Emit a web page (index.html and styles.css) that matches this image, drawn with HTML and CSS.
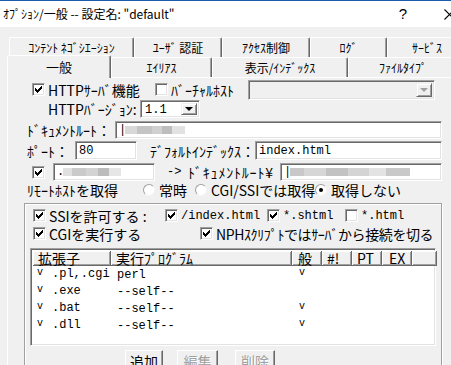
FILE: index.html
```html
<!DOCTYPE html>
<html lang="ja">
<head>
    <meta charset="UTF-8">
    <title>ｵﾌﾟｼｮﾝ/一般</title>
    <link rel="stylesheet" href="styles.css">
</head>
<body>
    <div class="titlebar">
        <span class="title">ｵﾌﾟｼｮﾝ/一般 -- 設定名: "default"</span>
        <span class="help">?</span>
        <span class="close">
            <svg width="11" height="11" viewBox="0 0 11 11"><path d="M0.5 0.5 L10.5 10.5 M10.5 0.5 L0.5 10.5" stroke="#000" stroke-width="1.1" fill="none"/></svg>
        </span>
    </div>

    <div class="tabs tabs-back">
        <div class="tab">ｺﾝﾃﾝﾄ ﾈｺﾞｼｴｰｼｮﾝ</div>
        <div class="tab">ﾕｰｻﾞ 認証</div>
        <div class="tab">ｱｸｾｽ制御</div>
        <div class="tab">ﾛｸﾞ</div>
        <div class="tab">ｻｰﾋﾞｽ</div>
    </div>
    <div class="tabs tabs-front">
        <div class="tab active">一般</div>
        <div class="tab">ｴｲﾘｱｽ</div>
        <div class="tab">表示/ｲﾝﾃﾞｯｸｽ</div>
        <div class="tab">ﾌｧｲﾙﾀｲﾌﾟ</div>
    </div>

    <div class="panel">
        <div class="row row-http">
            <label class="check w-http"><span class="cb on"></span>HTTPｻｰﾊﾞ機能</label>
            <label class="check w-vhost"><span class="cb"></span>ﾊﾞｰﾁｬﾙﾎｽﾄ</label>
            <div class="select disabled w-vselect"><span class="value"></span><span class="drop"><i class="arrow"></i></span></div>
        </div>

        <div class="row row-version">
            <span class="label w-version">HTTPﾊﾞｰｼﾞｮﾝ:</span>
            <div class="select w-vers"><span class="value">1.1</span><span class="drop"><i class="arrow"></i></span></div>
        </div>

        <div class="row row-docroot">
            <span class="label w-docroot">ﾄﾞｷｭﾒﾝﾄﾙｰﾄ：</span>
            <div class="field w-docfield"><span class="caret">|</span><span class="blur blur-a"></span></div>
        </div>

        <div class="row row-port">
            <span class="label w-port">ﾎﾟｰﾄ：</span>
            <div class="field w-portfield">80</div>
            <span class="label w-index">ﾃﾞﾌｫﾙﾄｲﾝﾃﾞｯｸｽ：</span>
            <div class="field w-indexfield">index.html</div>
        </div>

        <div class="row row-alias">
            <span class="cb on"></span>
            <div class="field w-aliasfield"><span class="caret">.</span><span class="blur blur-b"></span></div>
            <span class="label w-arrow">-&gt;</span>
            <span class="label w-aliasroot">ﾄﾞｷｭﾒﾝﾄﾙｰﾄ¥</span>
            <div class="field w-aliasroot-field"><span class="caret">|</span><span class="blur blur-c"></span></div>
        </div>

        <div class="row row-remote">
            <span class="label w-remote">ﾘﾓｰﾄﾎｽﾄを取得</span>
            <label class="radio w-always"><span class="rb"></span>常時</label>
            <label class="radio w-cgionly"><span class="rb"></span>CGI/SSIでは取得</label>
            <label class="radio"><span class="rb on"></span>取得しない</label>
        </div>

        <div class="group">
            <div class="row row-ssi">
                <label class="check w-ssi"><span class="cb on"></span>SSIを許可する :</label>
                <label class="check w-ssi-index"><span class="cb on"></span><span class="mono">/index.html</span></label>
                <label class="check w-ssi-shtml"><span class="cb on"></span><span class="mono">*.shtml</span></label>
                <label class="check"><span class="cb"></span><span class="mono">*.html</span></label>
            </div>
            <div class="row row-cgi">
                <label class="check w-cgi"><span class="cb on"></span>CGIを実行する</label>
                <label class="check tight"><span class="cb on"></span>NPHｽｸﾘﾌﾟﾄではｻｰﾊﾞから接続を切る</label>
            </div>

            <div class="listview">
                <div class="lv-head">
                    <span class="col c-ext">拡張子</span>
                    <span class="col c-prog">実行ﾌﾟﾛｸﾞﾗﾑ</span>
                    <span class="col c-gen">般</span>
                    <span class="col c-sb">#!</span>
                    <span class="col c-pt">PT</span>
                    <span class="col c-ex">EX</span>
                    <span class="col c-rest"></span>
                </div>
                <div class="lv-row">
                    <span class="cell c-ext"><i class="tick">v</i>.pl,.cgi</span>
                    <span class="cell c-prog">perl</span>
                    <span class="cell c-gen"><i class="tick">v</i></span>
                </div>
                <div class="lv-row">
                    <span class="cell c-ext"><i class="tick">v</i>.exe</span>
                    <span class="cell c-prog">--self--</span>
                    <span class="cell c-gen"></span>
                </div>
                <div class="lv-row">
                    <span class="cell c-ext"><i class="tick">v</i>.bat</span>
                    <span class="cell c-prog">--self--</span>
                    <span class="cell c-gen"><i class="tick">v</i></span>
                </div>
                <div class="lv-row">
                    <span class="cell c-ext"><i class="tick">v</i>.dll</span>
                    <span class="cell c-prog">--self--</span>
                    <span class="cell c-gen"><i class="tick">v</i></span>
                </div>
            </div>

            <div class="buttons">
                <button class="push w-add">追加</button>
                <button class="push w-edit" disabled>編集</button>
                <button class="push w-del" disabled>削除</button>
            </div>
        </div>
    </div>
</body>
</html>
```

FILE: styles.css
```css
html, body {
    margin: 0;
    padding: 0;
}

body {
    width: 451px;
    height: 365px;
    overflow: hidden;
    background: #f0f0f0;
    font-family: "Noto Sans CJK JP", sans-serif;
    font-size: 14px;
    line-height: 16px;
    color: #000;
}

/* title bar */
.titlebar {
    width: 472px;
    height: 26px;
    border-top: 1px solid #1b5eab;
    background: #fff;
    display: flex;
    align-items: center;
    font-size: 12px;
}

.title {
    flex: 1;
    margin-left: 3px;
    white-space: nowrap;
}

.help, .close {
    width: 46px;
    display: flex;
    justify-content: center;
    align-items: center;
}

.help {
    font-family: "Liberation Sans", sans-serif;
    font-size: 15px;
}

/* tabs */
.tabs {
    display: flex;
    height: 20px;
    font-size: 12px;
    white-space: nowrap;
}

.tabs-back {
    margin: 10px 0 0 9px;
}

.tabs-front {
    margin-left: 7px;
}

.tab {
    flex: none;
    box-sizing: border-box;
    height: 20px;
    border-top: 1px solid #fff;
    border-left: 1px solid #fff;
    border-right: 1px solid #696969;
    box-shadow: inset -1px 0 #a0a0a0;
    border-radius: 2px 2px 0 0;
    display: flex;
    align-items: center;
    justify-content: center;
    background: #f0f0f0;
}

.tabs-back .tab:nth-child(1) { width: 125px; }
.tabs-back .tab:nth-child(2) { width: 88px; }
.tabs-back .tab:nth-child(3) { width: 88px; }
.tabs-back .tab:nth-child(4) { width: 77px; }
.tabs-back .tab:nth-child(5) { width: 80px; }

.tabs-front .tab:nth-child(1) { width: 104px; }
.tabs-front .tab:nth-child(2) { width: 101px; }
.tabs-front .tab:nth-child(3) { width: 136px; }
.tabs-front .tab:nth-child(4) { width: 110px; }

.tab.active {
    height: 23px;
    margin-top: -2px;
    position: relative;
    z-index: 1;
    font-size: 13px;
}

/* panel */
.panel {
    margin-left: 7px;
    width: 460px;
    height: 300px;
    border-top: 1px solid #fff;
    border-left: 1px solid #fff;
    padding-top: 1px;
}

.row {
    display: flex;
    align-items: center;
    white-space: nowrap;
}

.row > * {
    flex: none;
}

.label {
    display: block;
}

.mono {
    font-family: "Liberation Mono", "Noto Sans CJK JP", monospace;
    font-size: 12px;
}

.row-http { height: 21px; margin-left: 24px; }
.row-version { height: 18px; margin-left: 40px; }
.row-docroot { height: 18px; margin-top: 3px; margin-left: 19px; }
.row-port { height: 19px; margin-top: 2px; margin-left: 19px; }
.row-alias { height: 18px; margin-top: 3px; margin-left: 24px; }
.row-remote { height: 17px; margin-left: 19px; }

.w-http { width: 123px; }
.w-vhost { width: 93px; }
.w-vselect { width: 187px; height: 20px; }
.w-version { width: 92px; }
.w-vers { width: 60px; height: 18px; }
.w-docroot { width: 88px; }
.w-docfield { width: 327px; height: 18px; }
.w-port { width: 48px; }
.w-portfield { width: 62px; height: 19px; }
.w-index { width: 105px; margin-left: 13px; }
.w-indexfield { width: 187px; height: 19px; }
.w-aliasfield { width: 102px; height: 18px; margin-left: 8px; }
.w-arrow { width: 21px; margin-left: 12px; font-family: "Liberation Mono", monospace; font-size: 12px; }
.w-aliasroot { width: 92px; letter-spacing: 0.8px; }
.w-aliasroot-field { width: 162px; height: 18px; }
.w-remote { width: 116px; }
.w-always { width: 52px; }
.w-cgionly { width: 120px; }

/* check boxes and radio buttons */
.check, .radio {
    display: flex;
    align-items: center;
    gap: 3px;
}

.radio {
    gap: 4px;
}

.tight {
    letter-spacing: -0.4px;
}

.cb {
    box-sizing: border-box;
    width: 13px;
    height: 13px;
    flex: none;
    background: #fff;
    border: 1px solid;
    border-color: #a0a0a0 #fff #fff #a0a0a0;
    box-shadow: inset 1px 1px #696969, inset -1px -1px #e3e3e3;
    position: relative;
}

.cb.on::after {
    content: "";
    position: absolute;
    left: 2px;
    top: 2px;
    width: 7px;
    height: 7px;
    background: url("data:image/svg+xml,%3Csvg xmlns='http://www.w3.org/2000/svg' width='7' height='7' viewBox='0 0 7 7'%3E%3Cpath d='M0 2h1v1h1v1h1v-1h1v-1h1v-1h1v-1h1v3h-1v1h-1v1h-1v1h-1v1h-1v-1h-1v-1h-1z' fill='%23000'/%3E%3C/svg%3E") no-repeat;
}

.rb {
    box-sizing: border-box;
    width: 12px;
    height: 12px;
    flex: none;
    border-radius: 50%;
    background: #fff;
    border: 1px solid;
    border-color: #a0a0a0 #f4f4f4 #f4f4f4 #a0a0a0;
    position: relative;
}

.rb.on::after {
    content: "";
    position: absolute;
    left: 3px;
    top: 3px;
    width: 4px;
    height: 4px;
    border-radius: 50%;
    background: #000;
}

/* sunken fields */
.field, .select, .listview {
    box-sizing: border-box;
    background: #fff;
    border: 1px solid;
    border-color: #a0a0a0 #fff #fff #a0a0a0;
    box-shadow: inset 1px 1px #696969, inset -1px -1px #e3e3e3;
}

.field {
    display: flex;
    align-items: center;
    padding-left: 3px;
    font-family: "Liberation Mono", "Noto Sans CJK JP", monospace;
    font-size: 12px;
}

.caret {
    width: 4px;
}

.blur {
    display: block;
    height: 8px;
    margin-left: 2px;
}

.blur-a {
    width: 60px;
    background: linear-gradient(to right, #d8d8d8 0 20%, #c4c4c4 20% 45%, #d0d0d0 45% 62%, #bdbdbd 62% 78%, #e2e2e2 78%);
}

.blur-b {
    width: 58px;
    background: linear-gradient(to right, #e0e0e0 0 15%, #cacaca 15% 40%, #d3d3d3 40% 60%, #bcbcbc 60% 80%, #e6e6e6 80%);
}

.blur-c {
    width: 120px;
    background: linear-gradient(to right, #c8c8c8 0 12%, #d6d6d6 12% 30%, #c2c2c2 30% 48%, #d4d4d4 48% 66%, #e3e3e3 66% 80%, #c9c9c9 80%);
}

/* combo boxes */
.select {
    display: flex;
    align-items: stretch;
    padding: 2px;
}

.select .value {
    flex: 1;
    padding-left: 2px;
    font-family: "Liberation Mono", monospace;
    font-size: 12px;
    line-height: 14px;
}

.select .drop {
    box-sizing: border-box;
    width: 16px;
    background: #f0f0f0;
    border: 1px solid;
    border-color: #f0f0f0 #696969 #696969 #f0f0f0;
    box-shadow: inset 1px 1px #fff, inset -1px -1px #a0a0a0;
    display: flex;
    justify-content: center;
    align-items: center;
}

.arrow {
    width: 0;
    height: 0;
    border-left: 4px solid transparent;
    border-right: 4px solid transparent;
    border-top: 4px solid #000;
}

.select.disabled {
    background: #f0f0f0;
}

.select.disabled .arrow {
    border-top-color: #a0a0a0;
}

/* group box */
.group {
    box-sizing: border-box;
    margin: 5px 0 0 16px;
    width: 418px;
    height: 170px;
    border: 1px solid #a0a0a0;
    box-shadow: inset 1px 1px #fff, 1px 1px #fff;
    padding-top: 3px;
}

.row-ssi { height: 17px; margin-left: 8px; }
.row-cgi { height: 17px; margin-left: 8px; margin-top: 1px; }

.w-ssi { width: 132px; }
.w-ssi-index { width: 102px; }
.w-ssi-shtml { width: 78px; }
.w-cgi { width: 167px; }

/* list view */
.listview {
    margin: 6px 0 0 5px;
    width: 406px;
    height: 98px;
    padding: 2px 0 0 2px;
}

.lv-head {
    display: flex;
    height: 15px;
}

.col {
    flex: none;
    box-sizing: border-box;
    display: block;
    height: 15px;
    line-height: 14px;
    background: #f0f0f0;
    border-right: 1px solid #696969;
    border-bottom: 1px solid #696969;
    box-shadow: inset 1px 1px #fff, inset -1px -1px #a0a0a0;
    padding-left: 5px;
}

.c-ext { width: 78px; }
.c-prog { width: 181px; }
.c-gen { width: 30px; }
.c-sb { width: 30px; }
.c-pt { width: 30px; }
.c-ex { width: 30px; padding-left: 7px; }
.c-rest { width: 25px; }

.col.c-gen { padding-left: 6px; }

.lv-row {
    display: flex;
    height: 17px;
    align-items: center;
    font-family: "Liberation Mono", monospace;
    font-size: 12px;
}

.cell {
    flex: none;
    box-sizing: border-box;
    display: block;
}

.cell.c-ext { padding-left: 4px; }
.cell.c-prog { padding-left: 6px; }
.cell.c-gen { padding-left: 7px; }

.tick {
    font-style: normal;
    font-size: 10px;
    display: inline-block;
    width: 15px;
    position: relative;
    top: -2px;
}

/* push buttons */
.buttons {
    display: flex;
    margin: 4px 0 0 100px;
}

.push {
    flex: none;
    box-sizing: border-box;
    height: 22px;
    padding: 0;
    font-family: "Noto Sans CJK JP", sans-serif;
    font-size: 14px;
    line-height: 16px;
    background: #f0f0f0;
    color: #000;
    border: 1px solid;
    border-color: #fff #696969 #696969 #fff;
    box-shadow: inset -1px -1px #a0a0a0;
}

.push:disabled {
    color: #a0a0a0;
    text-shadow: 1px 1px #fff;
}

.w-add { width: 38px; }
.w-edit { width: 41px; margin-left: 14px; }
.w-del { width: 40px; margin-left: 17px; }
```
